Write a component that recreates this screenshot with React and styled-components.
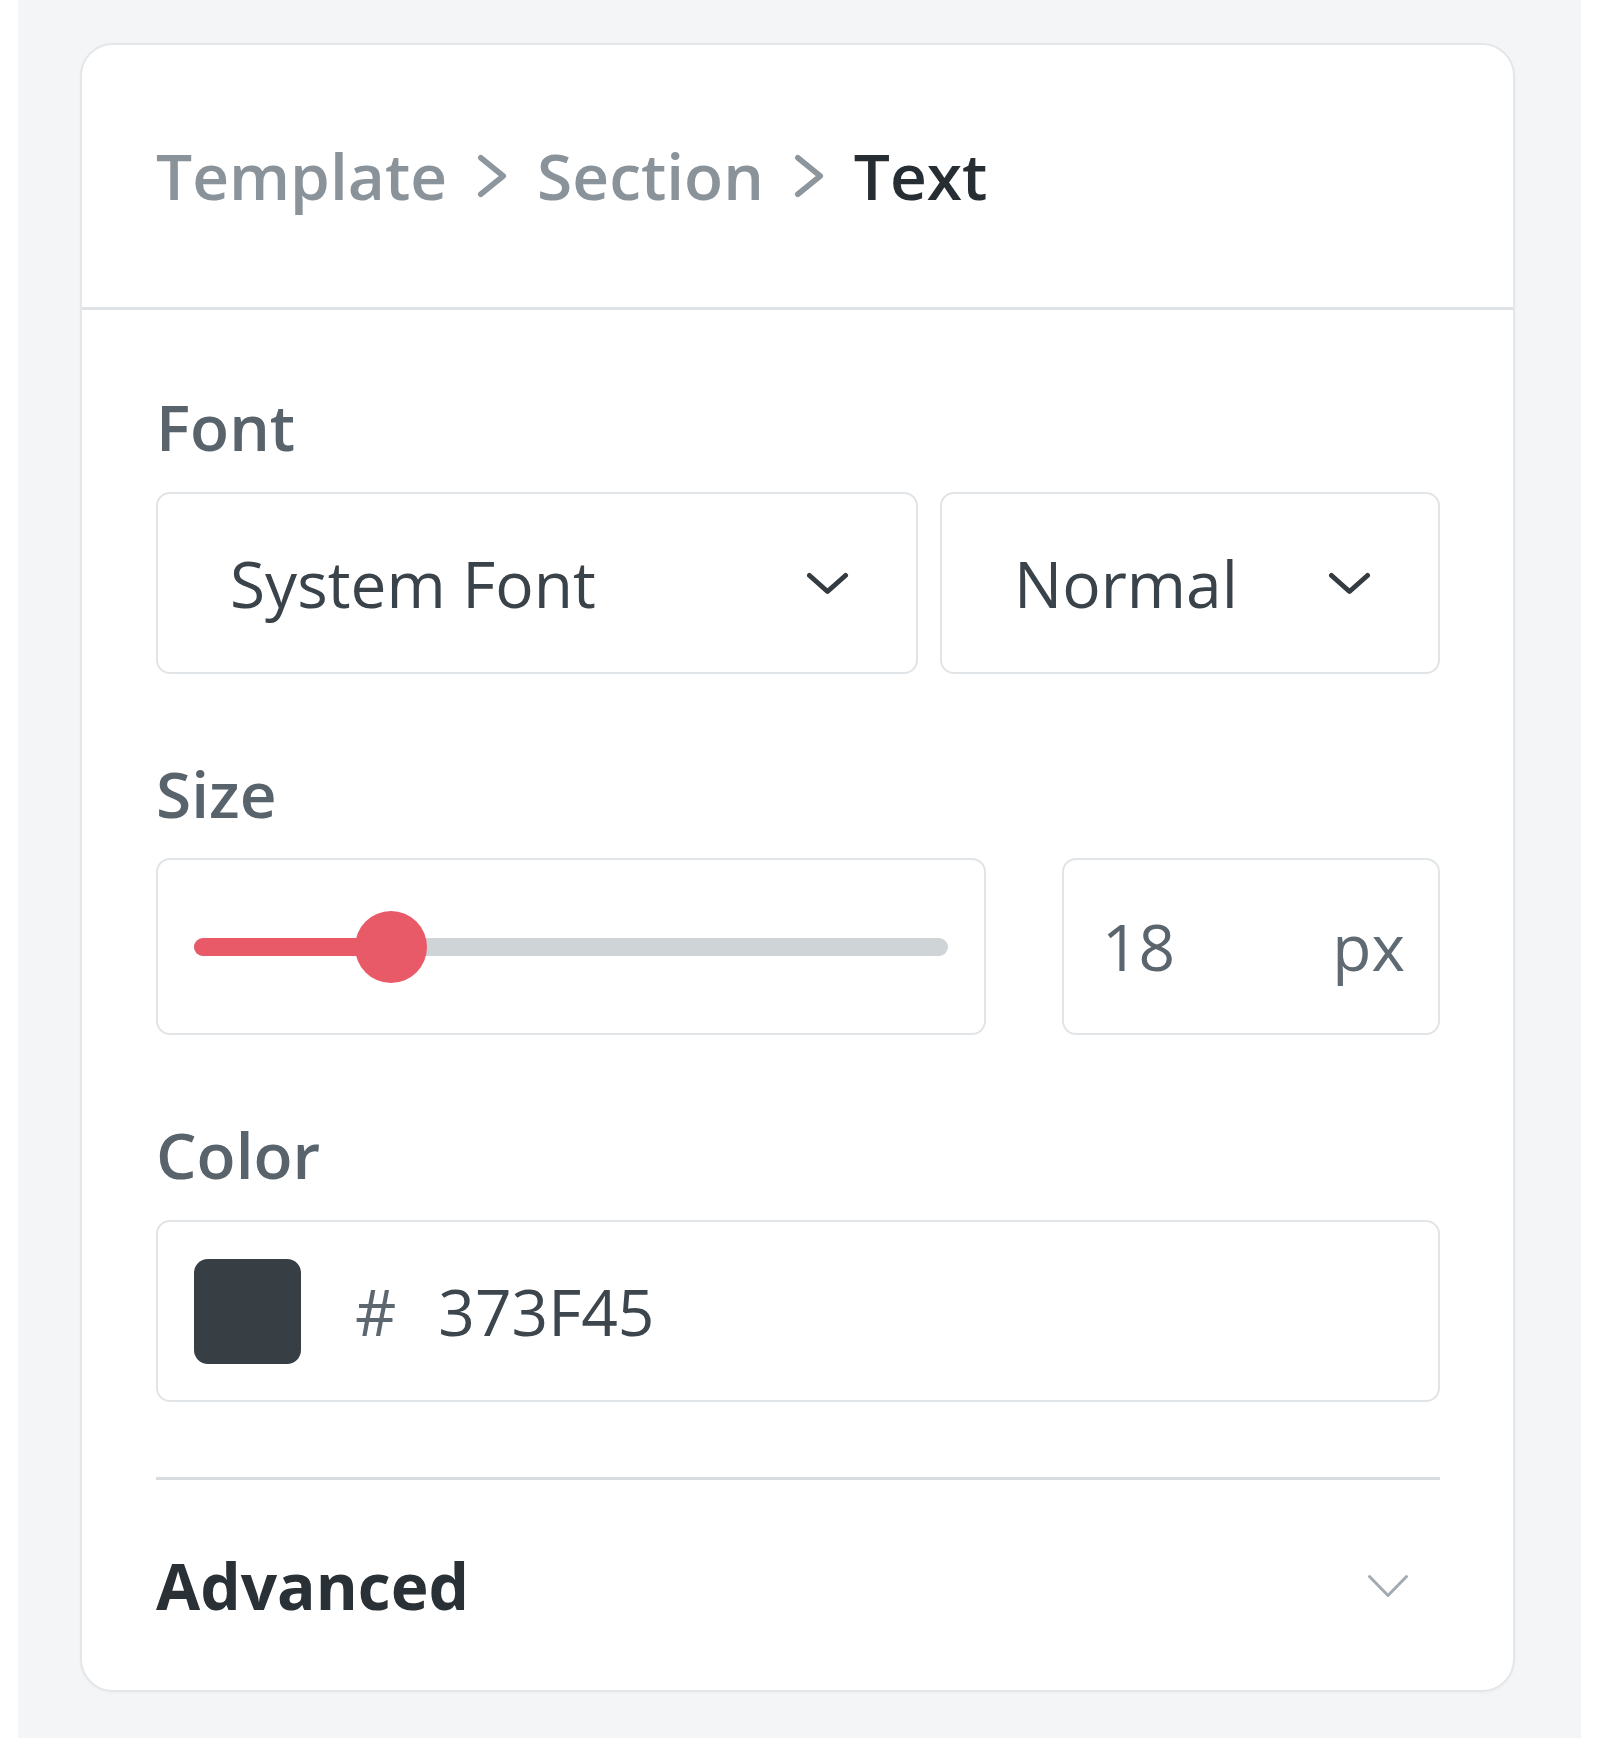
import React from 'react'
import styled, { createGlobalStyle } from 'styled-components'

const GlobalStyle = createGlobalStyle`
  body {
    margin: 0;
    background: #ffffff;
    font-family: 'Open Sans', 'Noto Sans', sans-serif;
  }
  * { box-sizing: border-box; }
`

function Chevron({ w = 43, h = 23, stroke = 5, color = '#343c42', dir = 'down' }) {
  const p = stroke / 2 + 1
  const points =
    dir === 'down'
      ? `${p},${p} ${w / 2},${h - p} ${w - p},${p}`
      : `${p},${p} ${w - p},${h / 2} ${p},${h - p}`
  return (
    <svg width={w} height={h} viewBox={`0 0 ${w} ${h}`} fill="none">
      <polyline points={points} stroke={color} strokeWidth={stroke} strokeLinecap="round" strokeLinejoin="round" />
    </svg>
  )
}

function App() {
  return (
    <>
      <GlobalStyle />
      <Page>
        <Card>
          <Header>
            <Crumb>Template</Crumb>
            <Chevron dir="right" w={30} h={44} stroke={5.5} color="#8d969d" />
            <Crumb>Section</Crumb>
            <Chevron dir="right" w={30} h={44} stroke={5.5} color="#8d969d" />
            <Crumb $current>Text</Crumb>
          </Header>

          <Body>
            <Field>
              <Label>Font</Label>
              <Row $cols="762px 1fr" $gap="22px">
                <Select>
                  <span>System Font</span>
                  <Chevron />
                </Select>
                <Select>
                  <span>Normal</span>
                  <Chevron />
                </Select>
              </Row>
            </Field>

            <Field>
              <Label>Size</Label>
              <Row $cols="830px 1fr" $gap="76px">
                <SliderBox>
                  <Track>
                    <Fill style={{ width: `${(391 - 194) / (949 - 194) * 100}%` }} />
                    <Thumb style={{ left: `${(391 - 194) / (949 - 194) * 100}%` }} />
                  </Track>
                </SliderBox>
                <NumberBox>
                  <span>18</span>
                  <Unit>px</Unit>
                </NumberBox>
              </Row>
            </Field>

            <Field>
              <Label>Color</Label>
              <ColorBox>
                <Swatch $color="#373F45" />
                <Hash>#</Hash>
                <HexValue>373F45</HexValue>
              </ColorBox>
            </Field>

            <Divider />

            <Advanced>
              <span>Advanced</span>
              <Chevron w={42} h={24} stroke={3} color="#a3abb1" />
            </Advanced>
          </Body>
        </Card>
      </Page>
    </>
  )
}

const Page = styled.div`
  margin-left: 18px;
  width: 1563px;
  height: 1738px;
  background: #f4f5f7;
  padding: 43px 0 0 62px;
`

const Card = styled.div`
  width: 1435px;
  background: #ffffff;
  border: 2px solid #e3e7ea;
  border-radius: 33px;
  box-shadow: 0 1px 3px rgba(40, 50, 60, 0.04);
`

const Header = styled.div`
  height: 265px;
  display: flex;
  align-items: center;
  gap: 30px;
  padding: 0 74px;
  border-bottom: 3px solid #dfe3e6;
`

const Crumb = styled.span`
  font-size: 64px;
  line-height: 64px;
  font-weight: 600;
  color: ${p => (p.$current ? '#262e33' : '#8a939a')};
`

const Body = styled.div`
  padding: 85px 73px 72px 74px;
  display: flex;
  flex-direction: column;
`

const Field = styled.div`
  display: flex;
  flex-direction: column;
  gap: 33px;
  margin-bottom: 88px;

  &:nth-of-type(2) {
    gap: 32px;
  }
  &:nth-of-type(3) {
    margin-bottom: 75px;
  }
`

const Label = styled.div`
  font-size: 64px;
  line-height: 64px;
  font-weight: 600;
  color: #58636b;
`

const Row = styled.div`
  display: grid;
  grid-template-columns: ${p => p.$cols};
  gap: ${p => p.$gap};
`

const Box = styled.div`
  border: 2px solid #e1e5e8;
  border-radius: 14px;
  background: #ffffff;
  display: flex;
  align-items: center;
`

const Select = styled(Box)`
  height: 182px;
  justify-content: space-between;
  padding: 0 67px 0 72px;
  font-size: 64px;
  color: #3a4349;
`

const SliderBox = styled(Box)`
  height: 177px;
  padding: 0 36px;
`

const Track = styled.div`
  position: relative;
  flex: 1;
  height: 18px;
  border-radius: 9px;
  background: #cfd4d7;
`

const Fill = styled.div`
  height: 100%;
  border-radius: 9px;
  background: #e95a68;
`

const Thumb = styled.div`
  position: absolute;
  top: 50%;
  width: 72px;
  height: 72px;
  border-radius: 50%;
  background: #e95a68;
  transform: translate(-50%, -50%);
`

const NumberBox = styled(Box)`
  height: 177px;
  justify-content: space-between;
  padding: 0 33px 0 38px;
  font-size: 64px;
  color: #5a656d;
`

const Unit = styled.span`
  color: #5f6a72;
`

const ColorBox = styled(Box)`
  height: 182px;
  padding: 0 36px;
  font-size: 64px;
`

const Swatch = styled.div`
  width: 107px;
  height: 105px;
  border-radius: 14px;
  background: ${p => p.$color};
  margin-right: 54px;
`

const Hash = styled.span`
  color: #5d676f;
  margin-right: 42px;
`

const HexValue = styled.span`
  color: #3d464d;
`

const Divider = styled.div`
  height: 3px;
  background: #d8dde0;
  margin-bottom: 74px;
`

const Advanced = styled.div`
  display: flex;
  align-items: center;
  justify-content: space-between;
  padding-right: 31px;
  font-size: 64px;
  line-height: 64px;
  font-weight: 700;
  color: #2a3136;
`

export default App
